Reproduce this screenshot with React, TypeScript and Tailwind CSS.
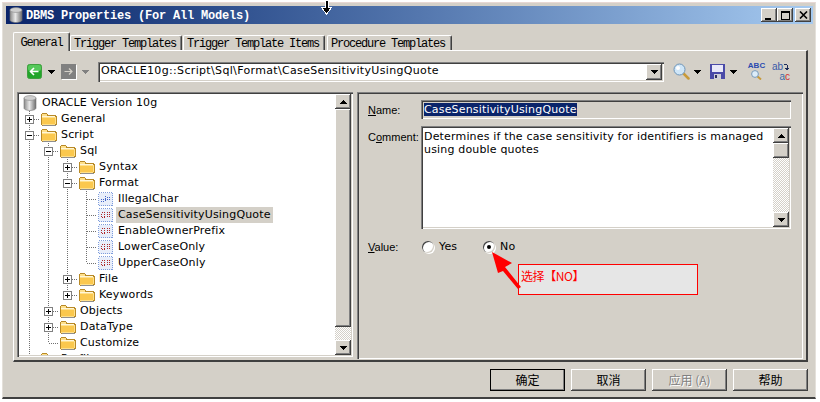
const raised =
  'bg-[#d4d0c8] shadow-[inset_-1px_-1px_0_#404040,inset_1px_1px_0_#fff,inset_-2px_-2px_0_#808080]'
const sunken =
  'shadow-[inset_1px_1px_0_#808080,inset_2px_2px_0_#404040,inset_-1px_-1px_0_#fff,inset_-2px_-2px_0_#d4d0c8]'
const dither =
  'bg-[repeating-conic-gradient(#fff_0_25%,#d4d0c8_0_50%)] bg-[length:2px_2px]'
const uiFont = "font-['DejaVu_Sans',sans-serif] text-[11px] tracking-[0.17px] text-black"
const labelFont = "font-['Liberation_Sans',sans-serif] text-[11px] tracking-normal"
const tabFont = "font-['Liberation_Mono',monospace] text-[12px] tracking-[-1.2px] text-black"
const tabEdge = 'border-l border-r border-t border-l-white border-r-[#404040] border-t-white shadow-[inset_-1px_0_0_#808080]'

const Cylinder = () => (
  <svg width="14" height="16" viewBox="0 0 14 16">
    <defs>
      <linearGradient id="cyl" x1="0" x2="1" y1="0" y2="0">
        <stop offset="0" stopColor="#8a8a8a" />
        <stop offset="0.45" stopColor="#e8e8e8" />
        <stop offset="1" stopColor="#6e6e6e" />
      </linearGradient>
    </defs>
    <path d="M1 3v10c0 1.500 2.700 2.500 6 2.500s6-1 6-2.500V3z" fill="url(#cyl)" stroke="#777" strokeWidth="0.6" />
    <ellipse cx="7" cy="3" rx="6" ry="2.400" fill="#cfcfcf" stroke="#888" strokeWidth="0.6" />
  </svg>
)

const Folder = () => (
  <svg width="17" height="14" viewBox="0 0 17 14" shapeRendering="crispEdges">
    <path d="M1.500 12.500V2.500l1-1h4l1.500 2h7l1 1v8l-1 1H2.500z" fill="#ffe08a" stroke="#b88a28" />
    <path d="M2 6h13v6H2z" fill="#fbc84e" />
    <path d="M2 4h13v1H2z" fill="#fff6d8" />
    <path d="M3 13h13v1H3z" fill="#8f8f8f" />
  </svg>
)

const DocItem = ({ blue }: { blue?: boolean }) => (
  <svg width="15" height="14" viewBox="0 0 15 14" shapeRendering="crispEdges">
    <rect x="0.500" y="0.500" width="14" height="13" fill="#e8eefa" stroke="#7f9ddc" strokeDasharray="1 1" />
    {blue ? (
      <path d="M3 7.500h9M7.500 4v6M3 9.500h3M9 5.500h3" stroke="#3f62c8" strokeDasharray="1 1" />
    ) : (
      <path d="M3.500 4.500h3v5h-3zM9.500 4v6M11.500 4v6" fill="none" stroke="#b02828" strokeDasharray="1 1" />
    )}
  </svg>
)

// tree connector: vertical line, elbow and optional +/- box
const Connector = ({ last, box }: { last?: boolean; box?: '+' | '-' }) => (
  <svg width="19" height="16" viewBox="0 0 19 16" className="shrink-0" shapeRendering="crispEdges">
    <path d={last ? 'M9.500 0V8' : 'M9.500 0V16'} stroke="#707070" strokeDasharray="1 1" />
    <path d="M9.500 8.500H19" stroke="#707070" strokeDasharray="1 1" />
    {box && (
      <>
        <rect x="5.500" y="4.500" width="8" height="8" fill="#fff" stroke="#808080" />
        <path d="M7 8.500h5" stroke="#000" />
        {box === '+' && <path d="M9.500 6v5" stroke="#000" />}
      </>
    )}
  </svg>
)

const Guide = ({ on }: { on: boolean }) => (
  <svg width="19" height="16" viewBox="0 0 19 16" className="shrink-0" shapeRendering="crispEdges">
    {on && <path d="M9.500 0V16" stroke="#707070" strokeDasharray="1 1" />}
  </svg>
)

type Row = {
  label: string
  guides: boolean[]
  box?: '+' | '-'
  last?: boolean
  doc?: 'red' | 'blue'
  selected?: boolean
}

const rows: Row[] = [
  { label: 'General', guides: [], box: '+' },
  { label: 'Script', guides: [], box: '-' },
  { label: 'Sql', guides: [true], box: '-' },
  { label: 'Syntax', guides: [true, true], box: '+' },
  { label: 'Format', guides: [true, true], box: '-' },
  { label: 'IllegalChar', guides: [true, true, true], doc: 'blue' },
  { label: 'CaseSensitivityUsingQuote', guides: [true, true, true], doc: 'red', selected: true },
  { label: 'EnableOwnerPrefix', guides: [true, true, true], doc: 'red' },
  { label: 'LowerCaseOnly', guides: [true, true, true], doc: 'red' },
  { label: 'UpperCaseOnly', guides: [true, true, true], doc: 'red', last: true },
  { label: 'File', guides: [true, true], box: '+' },
  { label: 'Keywords', guides: [true, true], box: '+', last: true },
  { label: 'Objects', guides: [true], box: '+' },
  { label: 'DataType', guides: [true], box: '+' },
  { label: 'Customize', guides: [true], last: true },
  { label: 'Profile', guides: [], box: '+' },
]

const TreeRow = ({ row }: { row: Row }) => (
  <div className="flex h-4 shrink-0 items-center">
    {row.guides.map((on, i) => (
      <Guide key={i} on={on} />
    ))}
    <Connector last={row.last} box={row.box} />
    {row.doc ? (
      <span className="ml-[2px] mr-[3px] flex w-[15px] justify-center">
        <DocItem blue={row.doc === 'blue'} />
      </span>
    ) : (
      <span className="ml-[1px] mr-[2px] flex w-[17px]">
        <Folder />
      </span>
    )}
    <span className={`flex h-4 items-center whitespace-nowrap px-[2px] ${row.selected ? 'bg-[#d4d0c8]' : ''}`}>
      {row.label}
    </span>
  </div>
)

const Arrow = ({ dir, gray }: { dir: 'up' | 'down'; gray?: boolean }) => (
  <svg width="7" height="4" viewBox="0 0 7 4" shapeRendering="crispEdges" className={dir === 'up' ? 'rotate-180' : ''}>
    <path d="M0 0h7L3.500 4z" fill={gray ? '#808080' : '#000'} />
  </svg>
)

const ScrollButton = ({ dir }: { dir: 'up' | 'down' }) => (
  <div className={`flex h-[15px] w-[16px] shrink-0 items-center justify-center ${raised}`}>
    <Arrow dir={dir} />
  </div>
)

const TitleButton = ({ children }: { children: React.ReactNode }) => (
  <div className={`flex h-[14px] w-[16px] items-center justify-center ${raised}`}>{children}</div>
)

const tabs = ['Trigger Templates', 'Trigger Template Items', 'Procedure Templates']

const ActionButton = ({ label, isDefault, disabled }: { label: string; isDefault?: boolean; disabled?: boolean }) => (
  <button
    className={`flex h-[22px] w-[75px] items-center justify-center font-['Noto_Sans_CJK_SC',sans-serif] text-[12px] ${raised} ${
      isDefault ? 'outline outline-1 -outline-offset-1 outline-black' : ''
    } ${disabled ? 'text-[#808080] [text-shadow:1px_1px_0_#fff]' : 'text-black'}`}
  >
    {label}
  </button>
)

export default function App() {
  return (
    <div className="relative h-[402px] w-[820px] overflow-hidden bg-white pl-[2px] pt-[2px]">
      <div className="flex h-[397px] w-[814px] flex-col border-b-2 border-l border-r border-t border-b-[#404040] border-l-[#e4e0da] border-r-[#e4e0da] border-t-[#e8d8d4] bg-[#d4d0c8] pl-[3px] pt-[3px]">
        {/* title bar */}
        <div className="flex h-[18px] w-[807px] shrink-0 items-center bg-gradient-to-r from-[#0a246a] to-[#a6caf0] pl-[3px] pr-[2px]">
          <Cylinder />
          <span className="ml-[3px] mt-[1px] whitespace-nowrap font-['Liberation_Mono',monospace] text-[12px] font-bold tracking-[-0.2px] text-white">
            DBMS Properties (For All Models)
          </span>
          <div className="ml-auto flex items-center">
            <TitleButton>
              <span className="mt-[8px] mr-[3px] h-[2px] w-[6px] bg-black" />
            </TitleButton>
            <TitleButton>
              <span className="h-[9px] w-[9px] border border-t-2 border-black" />
            </TitleButton>
            <div className="ml-[2px]">
              <TitleButton>
                <svg width="9" height="8" viewBox="0 0 9 8">
                  <path d="M1 0.500L8 7.500M8 0.500L1 7.500" stroke="#000" strokeWidth="1.6" />
                </svg>
              </TitleButton>
            </div>
          </div>
        </div>

        {/* tabs */}
        <div className="ml-[7px] mt-[8px] flex h-[18px] shrink-0 items-end">
          <div className={`z-10 flex h-[19px] w-[57px] -mb-px items-start justify-center rounded-t-[2px] bg-[#d4d0c8] pt-[1px] ${tabEdge} ${tabFont}`}>
            General
          </div>
          {tabs.map((tab, i) => (
            <div
              key={tab}
              className={`flex h-[15px] items-center rounded-t-[2px] pl-[3px] pt-[1px] ${tabEdge} ${tabFont} ${
                i === 0 ? 'w-[112px]' : i === 1 ? 'ml-[1px] w-[142px]' : 'ml-[2px] w-[125px]'
              }`}
            >
              {tab}
            </div>
          ))}
        </div>

        {/* tab panel */}
        <div className="ml-[7px] flex h-[312px] w-[795px] shrink-0 flex-col border-b-2 border-l border-r-2 border-t border-b-[#404040] border-l-white border-r-[#404040] border-t-white">
          {/* toolbar */}
          <div className="flex h-[41px] shrink-0 items-center pl-[13px]">
            <svg width="15" height="15" viewBox="0 0 15 15">
              <rect x="0.500" y="0.500" width="14" height="14" rx="2" fill="#22a52a" stroke="#3f9f3f" />
              <rect x="1" y="1" width="13" height="6" rx="2" fill="#55c95a" />
              <path d="M11.500 7.500H4M7 4L3.500 7.500L7 11" fill="none" stroke="#fff" strokeWidth="1.600" />
            </svg>
            <span className="ml-[6px] flex w-[7px]">
              <Arrow dir="down" />
            </span>
            <span className="ml-[6px] flex h-[15px] w-[15px] items-center justify-center bg-[#808080] shadow-[1px_1px_0_#fff]">
              <svg width="11" height="11" viewBox="0 0 11 11">
                <path d="M1.500 5.500H9M6 2.500L9 5.500L6 8.500" fill="none" stroke="#d4d0c8" strokeWidth="1.200" />
              </svg>
            </span>
            <span className="ml-[6px] flex w-[7px]">
              <Arrow dir="down" gray />
            </span>
            <div className={`ml-[9px] flex h-[20px] w-[566px] items-center justify-between bg-white pl-[3px] pr-[2px] ${sunken} ${uiFont}`}>
              <span className="whitespace-nowrap tracking-[0.34px]">ORACLE10g::Script\Sql\Format\CaseSensitivityUsingQuote</span>
              <div className={`flex h-[16px] w-[16px] items-center justify-center ${raised}`}>
                <Arrow dir="down" />
              </div>
            </div>
            <svg className="ml-[9px]" width="17" height="17" viewBox="0 0 17 17">
              <path d="M10 10l5.500 5.500" stroke="#c89a3a" strokeWidth="2.500" strokeLinecap="round" />
              <circle cx="6.500" cy="6.500" r="5.500" fill="#cfe6f8" stroke="#6d94b8" />
              <circle cx="5" cy="5" r="2" fill="#fff" />
            </svg>
            <span className="ml-[4px] flex w-[7px]">
              <Arrow dir="down" />
            </span>
            <svg className="ml-[9px]" width="15" height="15" viewBox="0 0 15 15" shapeRendering="crispEdges">
              <rect width="15" height="15" fill="#4a4aa8" />
              <rect x="2" y="1" width="11" height="7" fill="#e8e8f8" />
              <rect x="4" y="10" width="7" height="5" fill="#d0d0d8" />
              <rect x="5" y="11" width="2" height="3" fill="#303060" />
            </svg>
            <span className="ml-[5px] flex w-[7px]">
              <Arrow dir="down" />
            </span>
            <div className="ml-[11px] -mt-[2px] flex w-[17px] flex-col items-center leading-none">
              <span className="font-['Liberation_Sans',sans-serif] text-[8px] font-bold leading-[8px] text-[#2a4ab0]">ABC</span>
              <svg width="11" height="10" viewBox="0 0 11 10">
                <path d="M6 6l4 3.500" stroke="#c89a3a" strokeWidth="2" />
                <circle cx="4" cy="4" r="3.400" fill="#dcecf8" stroke="#7a9ab8" />
              </svg>
            </div>
            <div className="ml-[7px] flex w-[18px] flex-col font-['Liberation_Sans',sans-serif] text-[10px] leading-[10px]">
              <div className="flex items-start">
                <span className="text-[#3a5aa8]">ab</span>
                <svg className="ml-[1px] mt-[1px]" width="6" height="9" viewBox="0 0 6 9" shapeRendering="crispEdges">
                  <path d="M0 1.500h3.500V7M1.500 5.500h4M2.500 6.500h2" fill="none" stroke="#1a2a58" />
                </svg>
              </div>
              <span className="self-end text-[#3a6aa8]">
                a<span className="text-[#d03030]">c</span>
              </span>
            </div>
          </div>

          {/* panes */}
          <div className="flex min-h-0 flex-1">
            <div className={`ml-[3px] flex h-[265px] w-[336px] bg-white p-[2px] ${sunken} ${uiFont}`}>
              <div className="flex min-w-0 flex-1 flex-col overflow-hidden pt-[1px]">
                <div className="flex h-4 shrink-0 items-center">
                  <div className="relative ml-[1px] flex h-4 w-[19px] shrink-0 items-center pl-[3px]">
                    <Cylinder />
                  </div>
                  <span className="ml-[3px] whitespace-nowrap">ORACLE Version 10g</span>
                </div>
                {rows.map((row) => (
                  <div key={row.label} className="ml-[1px]">
                    <TreeRow row={row} />
                  </div>
                ))}
              </div>
              <div className="flex w-[16px] shrink-0 flex-col">
                <ScrollButton dir="up" />
                <div className={`h-[218px] w-[16px] ${raised}`} />
                <div className={`min-h-0 flex-1 ${dither}`} />
                <ScrollButton dir="down" />
              </div>
            </div>

            <div className={`ml-[4px] flex h-[267px] w-[446px] flex-col pl-[11px] pt-[8px] ${sunken} ${uiFont}`}>
              <div className="flex h-[19px] shrink-0 items-center">
                <span className={`w-[53px] pt-[1px] ${labelFont}`}><u>N</u>ame:</span>
                <div className={`flex h-[19px] w-[370px] items-center pl-[3px] ${sunken}`}>
                  <span className="bg-[#0a246a] leading-[13px] text-white">CaseSensitivityUsingQuote</span>
                </div>
              </div>
              <div className="mt-[7px] flex h-[103px] shrink-0">
                <span className={`mt-[3px] w-[53px] ${labelFont}`}>C<u>o</u>mment:</span>
                <div className={`flex h-[103px] w-[370px] bg-white p-[2px] ${sunken}`}>
                  <p className="min-w-0 flex-1 pl-[1px] pt-[2px] leading-[13px]">
                    Determines if the case sensitivity for identifiers is managed using double quotes
                  </p>
                  <div className="flex w-[16px] shrink-0 flex-col">
                    <ScrollButton dir="up" />
                    <div className={`h-[15px] w-[16px] shrink-0 ${raised}`} />
                    <div className={`min-h-0 flex-1 ${dither}`} />
                    <ScrollButton dir="down" />
                  </div>
                </div>
              </div>
              <div className="mt-[11px] flex h-[14px] shrink-0 items-center">
                <span className={`w-[54px] ${labelFont}`}><u>V</u>alue:</span>
                <span className="h-[12px] w-[12px] rounded-full bg-white shadow-[inset_1px_1px_0_#404040,inset_-1px_-1px_0_#d4d0c8,1px_1px_0_#fff]" />
                <span className="ml-[5px] w-[44px]">Yes</span>
                <span className="flex h-[12px] w-[12px] items-center justify-center rounded-full bg-white shadow-[inset_1px_1px_0_#404040,inset_-1px_-1px_0_#d4d0c8,1px_1px_0_#fff]">
                  <span className="h-[4px] w-[4px] rounded-full bg-black" />
                </span>
                <span className="ml-[5px]">No</span>
              </div>
            </div>
          </div>
        </div>

        {/* dialog buttons */}
        <div className="ml-[7px] mt-[7px] flex w-[795px] justify-end gap-[6px]">
          <ActionButton label="确定" isDefault />
          <ActionButton label="取消" />
          <ActionButton label="应用 (A)" disabled />
          <ActionButton label="帮助" />
        </div>
      </div>

      {/* annotation over the dialog */}
      <div className="absolute left-[518px] top-[264px] h-[31px] w-[180px] border border-[#ff0000] bg-[#e6e6e6] pl-[2px] pt-[1px] font-['Noto_Sans_CJK_SC',sans-serif] text-[12px] leading-[20px] tracking-[-0.4px] text-[#ff0000]">
        选择【NO】
      </div>
      <svg className="absolute left-[488px] top-[250px]" width="36" height="42" viewBox="0 0 36 42">
        <path d="M4 2L24 13L17 17L33 37L30 39L15 21L10 23z" fill="#ff0000" />
      </svg>

      {/* mouse cursor */}
      <svg className="absolute left-[320px] top-0" width="13" height="15" viewBox="0 0 13 15" shapeRendering="crispEdges">
        <path d="M5 0h3v7h4L6.500 14L1 7h4z" fill="#000" stroke="#fff" />
      </svg>
    </div>
  )
}
